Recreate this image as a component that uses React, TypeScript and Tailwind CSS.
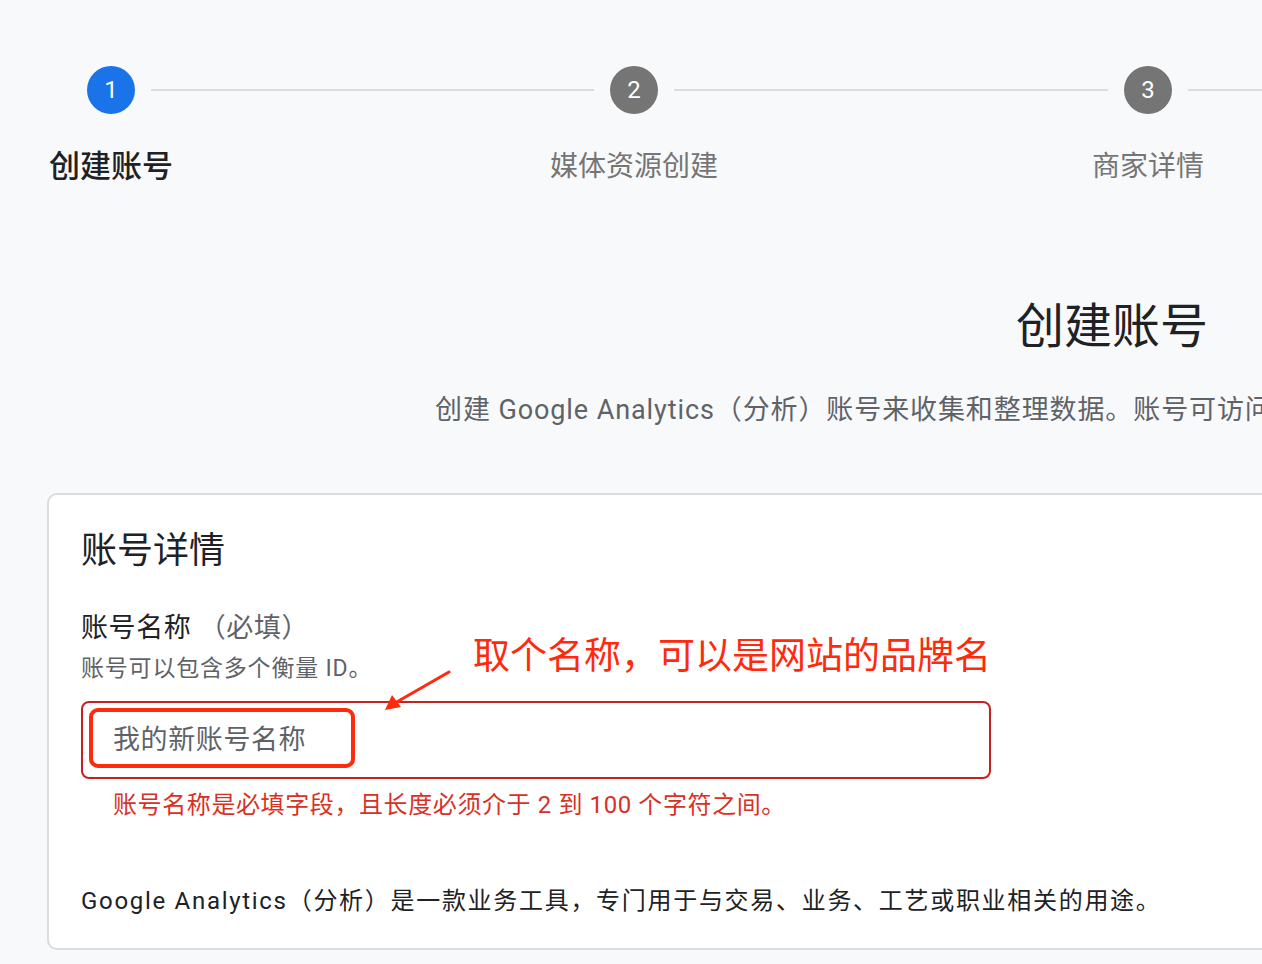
const font = '[font-family:Roboto,"Noto_Sans_CJK_SC",sans-serif]'

function Step({ n, label, active }: { n: number; label: string; active?: boolean }) {
  return (
    <div className="flex w-[80px] shrink-0 flex-col items-center">
      <div
        className={`flex h-[48px] w-[48px] items-center justify-center rounded-full text-[24px] text-white ${
          active ? 'bg-[#1a73e8]' : 'bg-[#757575]'
        }`}
      >
        {n}
      </div>
      <div
        className={`mt-[33px] whitespace-nowrap leading-[40px] ${
          active ? 'text-[31px] font-medium text-[#202124]' : 'text-[28px] text-[#757575]'
        }`}
      >
        {label}
      </div>
    </div>
  )
}

function Line({ w }: { w: string }) {
  return <div className={`mt-[23px] h-[2px] shrink-0 bg-[#dadce0] ${w}`} />
}

export default function App() {
  return (
    <div className={`h-[964px] w-[1262px] overflow-hidden bg-[#f8f9fa] ${font}`}>
      <div className="ml-[47px] w-[2130px]">
        {/* stepper */}
        <div className="flex pt-[66px] pl-[24px]">
          <Step n={1} label="创建账号" active />
          <Line w="w-[443px]" />
          <Step n={2} label="媒体资源创建" />
          <Line w="w-[434px]" />
          <Step n={3} label="商家详情" />
          <Line w="w-[434px]" />
          <Step n={4} label="业务目标" />
          <Line w="w-[434px]" />
        </div>

        <h1 className="mt-[108px] text-center text-[48px] leading-[64px] text-[#202124]">创建账号</h1>
        <p className="mt-[31px] pl-[388px] text-[27px] leading-[40px] tracking-[0.9px] whitespace-nowrap text-[#5f6368]">
          创建 Google Analytics（分析）账号来收集和整理数据。账号可访问多个媒体资源，您可以在账号一级管理用户权限。
        </p>

        {/* card */}
        <div className="relative mt-[63px] rounded-[10px] border-2 border-[#dadce0] bg-white pt-[30px] pl-[32px] pb-[30px]">
          <h2 className="text-[36px] leading-[52px] text-[#202124]">账号详情</h2>

          <div className="mt-[33px] text-[27px] leading-[36px] tracking-[0.6px] text-[#202124]">
            账号名称 <span className="text-[#5f6368]">（必填）</span>
          </div>
          <div className="mt-[7px] text-[23px] leading-[32px] tracking-[0.8px] text-[#5f6368]">账号可以包含多个衡量 ID。</div>

          <div className="mt-[16px] flex h-[78px] w-[910px] items-center rounded-[8px] border-2 border-[#c5221f] pl-[30px]">
            <span className="text-[27px] tracking-[0.6px] text-[#5f6368]">我的新账号名称</span>
          </div>
          <div className="mt-[10px] pl-[32px] text-[24px] leading-[32px] tracking-[0.6px] text-[#d93025]">
            账号名称是必填字段，且长度必须介于 2 到 100 个字符之间。
          </div>

          <p className="mt-[63px] text-[24px] leading-[34px] tracking-[1.7px] text-[#202124]">
            Google Analytics（分析）是一款业务工具，专门用于与交易、业务、工艺或职业相关的用途。
          </p>

          {/* annotation overlay */}
          <div className="absolute top-[213px] left-[40px] h-[60px] w-[266px] rounded-[9px] border-[4px] border-[#ff2a0c]" />
          <div className="absolute top-[137px] left-[424px] text-[37px] leading-[50px] whitespace-nowrap text-[#ff2a0c]">
            取个名称，可以是网站的品牌名
          </div>
          <svg className="absolute top-[172px] left-[330px]" width="72" height="46" viewBox="0 0 72 46">
            <line x1="70" y1="5" x2="16" y2="36" stroke="#ff2a0c" strokeWidth="3" strokeLinecap="round" />
            <polygon points="6,43 13,28 22,40" fill="#ff2a0c" />
          </svg>
        </div>
      </div>
    </div>
  )
}
